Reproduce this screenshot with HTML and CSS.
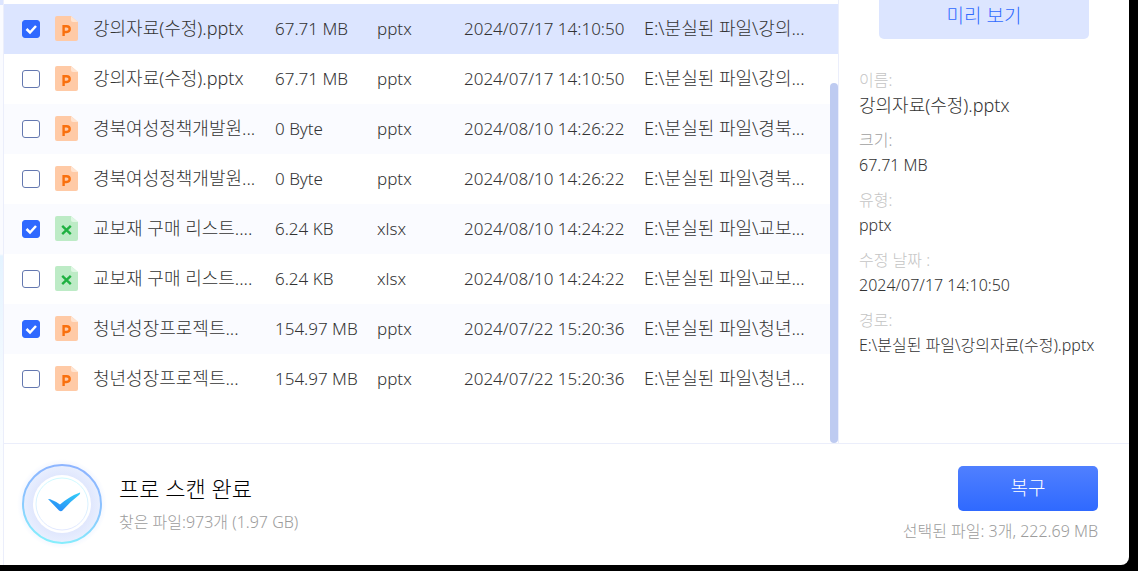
FILE: index.html
```html
<!DOCTYPE html>
<html lang="ko">
<head>
<meta charset="utf-8">
<meta name="viewport" content="width=device-width, initial-scale=1">
<title>프로 스캔 완료</title>
<link rel="stylesheet" href="styles.css">
</head>
<body>
<svg class="defs" aria-hidden="true">
  <symbol id="ppt" viewBox="0 0 23 25">
    <path fill="#ffcaa6" d="M2 0H16L23 6V23Q23 25 21 25H2Q0 25 0 23V2Q0 0 2 0Z"/>
    <path fill="#ffe4d1" d="M16 0L23 6H18Q16 6 16 4Z"/>
    <path fill="none" stroke="#f9700e" stroke-width="2.4" d="M8.6 20V10.2H11.6Q14.7 10.2 14.7 13.1T11.6 16H8.6"/>
  </symbol>
  <symbol id="xls" viewBox="0 0 23 25">
    <path fill="#bdebc6" d="M2 0H16L23 6V23Q23 25 21 25H2Q0 25 0 23V2Q0 0 2 0Z"/>
    <path fill="#def7e3" d="M16 0L23 6H18Q16 6 16 4Z"/>
    <path fill="none" stroke="#1fb141" stroke-width="2.4" d="M7.2 9.8L15.8 18.2M15.8 9.8L7.2 18.2"/>
  </symbol>
</svg>
<div class="window">
  <div class="edge"></div>
  <div class="content">
    <main class="main">
      <section class="files">
        <table class="table">
          <colgroup><col class="c-check"><col class="c-name"><col class="c-size"><col class="c-type"><col class="c-date"><col></colgroup>
          <tbody>
            <tr class="selected"><td><input type="checkbox" aria-label="강의자료(수정).pptx" checked></td><td><span class="file"><svg class="icon"><use href="#ppt"/></svg>강의자료(수정).pptx</span></td><td>67.71 MB</td><td>pptx</td><td>2024/07/17 14:10:50</td><td class="path">E:\분실된 파일\강의...</td></tr>
            <tr><td><input type="checkbox" aria-label="강의자료(수정).pptx"></td><td><span class="file"><svg class="icon"><use href="#ppt"/></svg>강의자료(수정).pptx</span></td><td>67.71 MB</td><td>pptx</td><td>2024/07/17 14:10:50</td><td class="path">E:\분실된 파일\강의...</td></tr>
            <tr><td><input type="checkbox" aria-label="경북여성정책개발원"></td><td><span class="file"><svg class="icon"><use href="#ppt"/></svg>경북여성정책개발원...</span></td><td>0 Byte</td><td>pptx</td><td>2024/08/10 14:26:22</td><td class="path">E:\분실된 파일\경북...</td></tr>
            <tr><td><input type="checkbox" aria-label="경북여성정책개발원"></td><td><span class="file"><svg class="icon"><use href="#ppt"/></svg>경북여성정책개발원...</span></td><td>0 Byte</td><td>pptx</td><td>2024/08/10 14:26:22</td><td class="path">E:\분실된 파일\경북...</td></tr>
            <tr><td><input type="checkbox" aria-label="교보재 구매 리스트" checked></td><td><span class="file"><svg class="icon"><use href="#xls"/></svg>교보재 구매 리스트....</span></td><td>6.24 KB</td><td>xlsx</td><td>2024/08/10 14:24:22</td><td class="path">E:\분실된 파일\교보...</td></tr>
            <tr><td><input type="checkbox" aria-label="교보재 구매 리스트"></td><td><span class="file"><svg class="icon"><use href="#xls"/></svg>교보재 구매 리스트....</span></td><td>6.24 KB</td><td>xlsx</td><td>2024/08/10 14:24:22</td><td class="path">E:\분실된 파일\교보...</td></tr>
            <tr><td><input type="checkbox" aria-label="청년성장프로젝트" checked></td><td><span class="file"><svg class="icon"><use href="#ppt"/></svg>청년성장프로젝트...</span></td><td>154.97 MB</td><td>pptx</td><td>2024/07/22 15:20:36</td><td class="path">E:\분실된 파일\청년...</td></tr>
            <tr><td><input type="checkbox" aria-label="청년성장프로젝트"></td><td><span class="file"><svg class="icon"><use href="#ppt"/></svg>청년성장프로젝트...</span></td><td>154.97 MB</td><td>pptx</td><td>2024/07/22 15:20:36</td><td class="path">E:\분실된 파일\청년...</td></tr>
          </tbody>
        </table>
        <div class="scrollbar"></div>
      </section>
      <aside class="details">
        <button class="preview" type="button">미리 보기</button>
        <dl class="props">
          <div><dt>이름:</dt><dd class="title">강의자료(수정).pptx</dd></div>
          <div><dt class="dark">크기:</dt><dd>67.71 MB</dd></div>
          <div><dt>유형:</dt><dd>pptx</dd></div>
          <div><dt>수정 날짜 :</dt><dd>2024/07/17 14:10:50</dd></div>
          <div><dt>경로:</dt><dd>E:\분실된 파일\강의자료(수정).pptx</dd></div>
        </dl>
      </aside>
    </main>
    <footer class="footer">
      <svg class="done" viewBox="0 0 96 96" aria-hidden="true">
        <defs>
          <linearGradient id="ring" x1=".6" y1="0" x2=".4" y2="1"><stop offset="0" stop-color="#8db4ff"/><stop offset=".5" stop-color="#8bc4ff"/><stop offset="1" stop-color="#85effc"/></linearGradient>
          <linearGradient id="inner" x1="0" y1="0" x2="0" y2="1"><stop offset="0" stop-color="#cffaff"/><stop offset="1" stop-color="#e2e8ff"/></linearGradient>
          <linearGradient id="tick" x1="1" y1="0" x2=".3" y2="1"><stop offset="0" stop-color="#35d0f8"/><stop offset="1" stop-color="#278df8"/></linearGradient>
          <radialGradient id="glow"><stop offset=".8" stop-color="#eef3ff"/><stop offset="1" stop-color="#fff"/></radialGradient>
          <radialGradient id="band"><stop offset=".7" stop-color="#dfe6fd"/><stop offset="1" stop-color="#e9effe"/></radialGradient>
        </defs>
        <circle cx="48" cy="48" r="45" fill="url(#glow)"/>
        <circle cx="48" cy="48" r="39" fill="url(#band)" stroke="url(#ring)" stroke-width="2"/>
        <circle cx="48" cy="48" r="29" fill="#fff"/>
        <circle cx="48" cy="48" r="26" fill="#fff" stroke="url(#inner)"/>
        <path fill="url(#tick)" d="M34 43Q38 43 46 48.5Q56 40 66 36.5Q66.500 37.500 65 39Q57 45 48.500 54.500Q47 56 45 54.500Z"/>
      </svg>
      <div class="status">
        <h1>프로 스캔 완료</h1>
        <p>찾은 파일:973개 (1.97 GB)</p>
      </div>
      <div class="action">
        <button class="recover" type="button">복구</button>
        <p>선택된 파일: 3개, 222.69 MB</p>
      </div>
    </footer>
  </div>
</div>
</body>
</html>
```
FILE: styles.css
```css
* { box-sizing: border-box; }

body {
  margin: 0;
  min-height: 100vh;
  display: flex;
  padding: 0 9px 6px 0;
  background: #000;
  color: #333;
  font: 300 16px/25px "Noto Sans", "Noto Sans CJK KR", sans-serif;
}

h1, p, dl, dd { margin: 0; }
button { border: 0; font: inherit; cursor: pointer; }
.defs { position: absolute; width: 0; height: 0; }

.window {
  flex: 1;
  display: flex;
  background: #fff;
  border-bottom-right-radius: 8px;
  overflow: hidden;
}

.edge {
  width: 4px;
  flex: none;
  border-right: 1px solid #ebeefb;
  background: linear-gradient(#dce5ff 5px, #fafbff 5px, #fafbff 254px, #e4f3ff 256px, #f7fbff 400px, #fff);
}

.content { flex: 1; min-width: 0; display: flex; flex-direction: column; }
.main { flex: 1; display: flex; }

.files {
  position: relative;
  flex: 1;
  min-width: 0;
  padding-top: 4px;
}

.table {
  width: 100%;
  table-layout: fixed;
  border-collapse: collapse;
  font-size: 17px;
}
.c-check { width: 50px; }
.c-name { width: 221px; }
.c-size { width: 102px; }
.c-type { width: 87px; }
.c-date { width: 180px; }

tr:nth-child(odd) { background: #fafbff; }
tr.selected { background: #dce5ff; }
td { height: 50px; padding: 0 0 2px; white-space: nowrap; overflow: hidden; }
td:first-child { padding: 0; }
.file { display: flex; align-items: center; gap: 15px; padding-left: 1px; }
.file, .path { font-size: 18px; }
.icon { width: 23px; height: 25px; flex: none; }

input {
  appearance: none;
  display: block;
  width: 18px;
  height: 18px;
  margin: 0 0 0 18px;
  border: 1px solid #6478b0;
  border-radius: 3px;
  background: #fff;
}
input:checked {
  border-color: #2f69ff;
  background: #2f69ff url("data:image/svg+xml,%3Csvg xmlns='http://www.w3.org/2000/svg' viewBox='0 0 16 16'%3E%3Cpath d='M3.500 8L7 11.500L13 5' fill='none' stroke='white' stroke-width='2.500'/%3E%3C/svg%3E");
}

.scrollbar {
  position: absolute;
  top: 83px;
  right: 0;
  bottom: 0;
  width: 8px;
  border-radius: 4px;
  background: #becbf1;
}

.details {
  width: 291px;
  flex: none;
  padding: 0 20px;
  border-left: 1px solid #ebeefb;
}
.preview {
  display: block;
  width: 210px;
  height: 39px;
  margin: 0 auto 29px;
  padding: 0 0 7px;
  border-radius: 0 0 5px 5px;
  background: #dce5ff;
  color: #2f69ff;
  font-size: 19px;
}
.props { display: flex; flex-direction: column; gap: 10px; }
dt { color: #c4c4c4; }
dt.dark { color: #a0a0a0; }
dd { white-space: nowrap; }
.title { font-size: 18px; }

.footer {
  display: flex;
  align-items: center;
  min-height: 122px;
  padding: 0 31px 2px 10px;
  border-top: 1px solid #ebeefb;
}
.done { width: 96px; height: 96px; flex: none; }
.status { flex: 1; padding: 0 0 5px 9px; color: #9c9c9c; }
.status h1 {
  color: #000;
  font-size: 22px;
  font-weight: 300;
  line-height: 43px;
}
.action { display: flex; flex-direction: column; align-items: flex-end; gap: 8px; padding-top: 2px; color: #9c9c9c; }
.recover {
  width: 140px;
  height: 45px;
  border-radius: 5px;
  background: linear-gradient(#5080ff, #2f69ff);
  color: #fff;
  font-size: 19px;
}
```
